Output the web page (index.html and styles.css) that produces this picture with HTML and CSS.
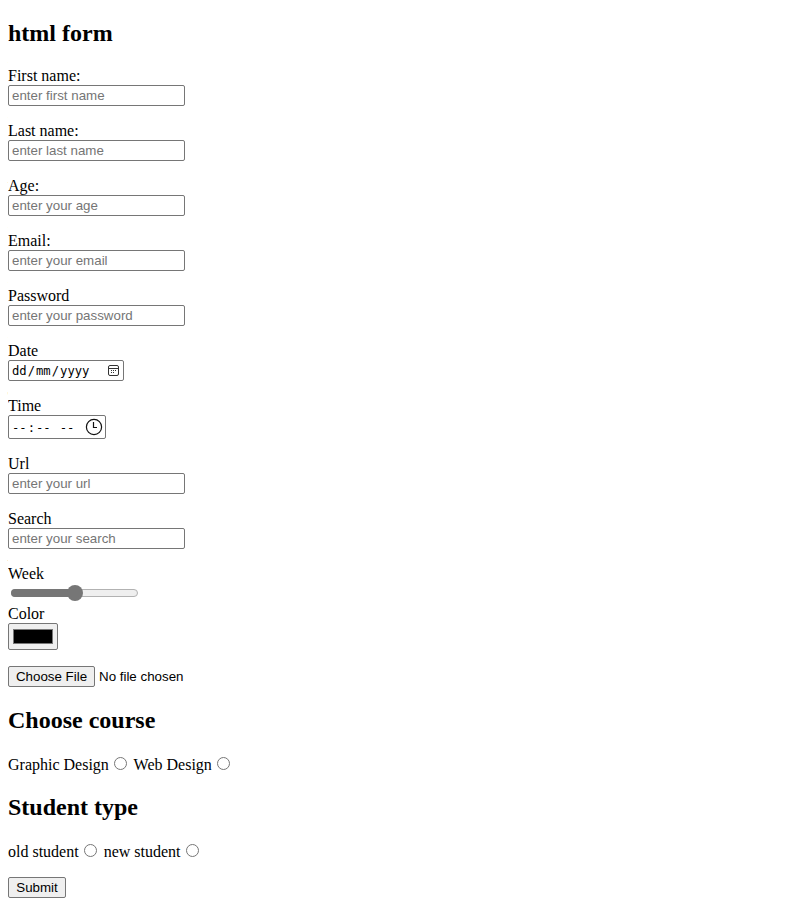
FILE: index.html
```html
<!DOCTYPE html>
<html lang="en">
<head>
<meta charset="utf-8">
<title>html form</title>
<link rel="stylesheet" href="styles.css">
</head>
<body>
<h2>html form</h2>
<form>
<div class="field"><label for="fn">First name:</label><input id="fn" class="text" type="text" placeholder="enter first name"></div>
<div class="field"><label for="ln">Last name:</label><input id="ln" class="text" type="text" placeholder="enter last name"></div>
<div class="field"><label for="age">Age:</label><input id="age" class="text" type="number" placeholder="enter your age"></div>
<div class="field"><label for="em">Email:</label><input id="em" class="text" type="email" placeholder="enter your email"></div>
<div class="field"><label for="pw">Password</label><input id="pw" class="text" type="password" placeholder="enter your password"></div>
<div class="field"><label>Date</label>
<div class="picker date"><span class="part">dd</span><span>/</span><span class="part">mm</span><span>/</span><span class="part">yyyy</span>
<svg class="calendar" viewBox="0 0 13 13" width="13" height="13" fill="none" stroke="#333"><rect x="1.5" y="1.5" width="10" height="10" rx="1.5"/><path d="M1.5 4.5h10"/><path d="M6 6.5h1M8 6.5h1M4 6.5h1M4 8.5h1M6 8.5h1"/></svg></div></div>
<div class="field time-field"><label>Time</label>
<div class="picker time"><span class="part">--</span><span>:</span><span class="part">--</span><span class="part meridiem">--</span>
<svg class="clock" viewBox="0 0 18 18" width="18" height="18" fill="none" stroke="#111" stroke-width="1.2"><circle cx="9" cy="9" r="7.6"/><path d="M8.5 4v5.5H12"/></svg></div></div>
<div class="field"><label for="url">Url</label><input id="url" class="text" type="url" placeholder="enter your url"></div>
<div class="field"><label for="se">Search</label><input id="se" class="text" type="search" placeholder="enter your search"></div>
<div class="field week"><label>Week</label><div class="slider"><div class="track"></div><div class="thumb"></div></div></div>
<div class="field color"><label>Color</label><div class="swatch-button"><div class="swatch"></div></div></div>
<div class="file"><button type="button">Choose File</button><span>No file chosen</span></div>
<h2>Choose course</h2>
<div class="choices">Graphic Design<input type="radio" name="course"> Web Design<input type="radio" name="course"></div>
<h2>Student type</h2>
<div class="choices">old student<input type="radio" name="student"> new student<input type="radio" name="student"></div>
<button class="submit" type="button">Submit</button>
</form>
</body>
</html>
```
FILE: styles.css
```css
* { box-sizing: border-box; }
body { margin: 8px; background: #fff; color: #000; font: 16px/18px "Liberation Serif", serif; overflow: hidden; }
h2 { margin: 0; font-size: 24px; line-height: 27px; }
body > h2 { margin: 12px 0 20px; }
.field { display: flex; flex-direction: column; align-items: flex-start; height: 55px; }
label { display: block; height: 18px; }
input, button, .file { font: 13.333px/15px "Liberation Sans", sans-serif; }
.text { appearance: none; width: 177px; height: 21px; margin: 0; padding: 1px 3px; border: 1px solid #767676; border-radius: 2px; outline: none; background: #fff; }
.text::placeholder { color: #757575; opacity: 1; }
.text::-webkit-inner-spin-button { display: none; }
.picker { display: flex; align-items: center; border: 1px solid #767676; border-radius: 2px; font: 12.2px/15px "DejaVu Sans Mono", monospace; padding: 0 3px 0 2px; }
.picker span { padding-top: 2px; }
.picker .part { padding-left: 1px; padding-right: 1px; }
.date { width: 116px; height: 21px; }
.time { width: 98px; height: 24px; padding-right: 2px; }
.time-field { height: 58px; }
.meridiem { margin-left: 7px; }
.picker svg { margin-left: auto; }
.field.week { height: 40px; }
.slider { position: relative; width: 127px; height: 16px; margin: 2px 3px; }
.track { height: 8px; margin: 4px 0; border: 1px solid #b2b2b2; border-radius: 4px; background: #efefef; }
.track::before { content: ""; display: block; width: 64px; height: 8px; margin: -1px; border-radius: 4px 0 0 4px; background: #767676; }
.thumb { position: absolute; left: 56px; top: 0; width: 16px; height: 16px; border-radius: 50%; background: #767676; }
.field.color { height: 61px; }
.swatch-button { width: 50px; height: 27px; padding: 5px 4px; border: 1px solid #767676; border-radius: 2px; background: #efefef; }
.swatch { height: 15px; border: 1px solid #777; background: #000; }
button { margin: 0; height: 21px; padding: 1px 0; border: 1px solid #767676; border-radius: 2px; background: #efefef; color: #000; }
.file { display: flex; align-items: center; gap: 4px; height: 21px; margin-bottom: 20px; }
.file button { width: 87px; }
.choices { height: 20px; margin: 20px 0; }
.choices input { margin: 3px 3px 0 5px; width: 13px; height: 13px; }
.submit { display: block; width: 58px; margin-top: -4px; }
```
